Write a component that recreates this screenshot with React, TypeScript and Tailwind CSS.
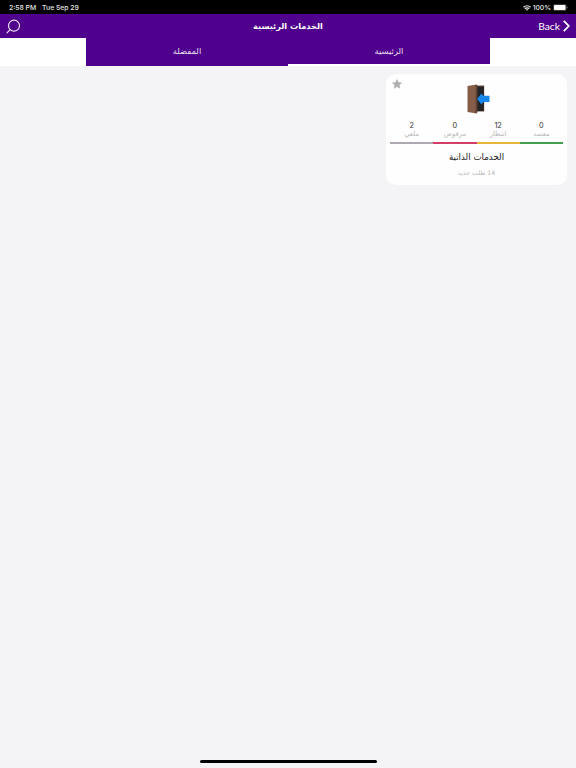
import React from 'react';

interface Stat {
  value: number;
  label: string;
  bar: string;
}

const stats: Stat[] = [
  { value: 0, label: 'معتمد', bar: 'bg-[#439f50]' },
  { value: 12, label: 'انتظار', bar: 'bg-[#e9b437]' },
  { value: 0, label: 'مرفوض', bar: 'bg-[#d33d68]' },
  { value: 2, label: 'ملغي', bar: 'bg-[#aea9b0]' },
];

const App: React.FC = () => {
  return (
    <div className="relative flex h-screen w-full flex-col overflow-hidden bg-[#f4f3f6] font-['Inter','DejaVu_Sans',sans-serif]">
      <StatusBar />
      <header className="grid h-6 grid-cols-3 items-center bg-[#4f008c] text-white">
        <SearchIcon />
        <h1 dir="rtl" className="whitespace-nowrap text-center font-['DejaVu_Sans',sans-serif] text-[8.2px] leading-6 font-bold">
          الخدمات الرئيسية
        </h1>
        <button className="flex items-center justify-end gap-[3px] pr-[6px] font-['Lato',sans-serif] text-[10.3px] leading-6">
          <span className="-mt-px">Back</span>
          <ChevronIcon />
        </button>
      </header>
      <nav className="flex h-7 justify-center bg-white">
        <div dir="rtl" className="flex w-[404px] bg-[#4f008c] text-[8.4px] text-[#eadff2]">
          <Tab label="الرئيسية" active />
          <Tab label="المفضلة" />
        </div>
      </nav>
      <main dir="rtl" className="flex-1 px-[9px] pt-2">
        <ServiceCard />
      </main>
      <div className="absolute bottom-[5px] left-[200px] h-[3px] w-[177px] rounded-full bg-black" />
    </div>
  );
};

const StatusBar = () => (
  <div className="flex h-[14px] items-center justify-between bg-black pr-[8px] pl-[9px] text-[6.8px] leading-[14px] font-medium text-[#e8e8e8]">
    <div className="flex gap-[6px] pt-px">
      <span>2:58 PM</span>
      <span>Tue Sep 29</span>
    </div>
    <div className="flex items-center gap-[2px] pt-px">
      <svg className="h-[6px] w-2" viewBox="0 0 16 12" fill="none" stroke="currentColor" strokeWidth="2.6">
        <path d="M1 4.5a10 10 0 0 1 14 0M3.6 7.4a6.2 6.2 0 0 1 8.8 0" />
        <path d="M8 11.5L5.6 9.2a3.4 3.4 0 0 1 4.8 0z" fill="currentColor" stroke="none" />
      </svg>
      <span>100%</span>
      <svg className="h-[7px] w-[15px]" viewBox="0 0 15 7">
        <rect x="0.3" y="0.3" width="13" height="6.4" rx="1.8" fill="none" stroke="#888" strokeWidth="0.5" />
        <rect x="1" y="1" width="11.6" height="5" rx="1" fill="#fff" />
        <path d="M14 2.6v1.8q.7-.3.7-.9t-.7-.9z" fill="#888" />
      </svg>
    </div>
  </div>
);

const Tab = ({ label, active }: { label: string; active?: boolean }) => (
  <button className={`flex-1 border-b-2 pt-[1px] font-['DejaVu_Sans',sans-serif] ${active ? 'border-white' : 'border-transparent'}`}>
    {label}
  </button>
);

const ServiceCard = () => (
  <section className="relative h-[111px] w-[181px] rounded-[10px] bg-[#fefefe] px-1 pt-[10px]">
    <StarIcon />
    <DoorIcon />
    <div className="mt-[6px] grid grid-cols-4 text-center">
      {stats.map((stat) => (
        <div key={stat.label}>
          <div className="pt-px text-[7.3px] leading-[9px] text-[#333]">{stat.value}</div>
          <div className="h-3 font-['DejaVu_Sans',sans-serif] text-[6.8px] leading-[9px] text-[#b8b8b8]">{stat.label}</div>
          <div className={`h-[2px] ${stat.bar}`} />
        </div>
      ))}
    </div>
    <h2 className="mt-[6px] text-center font-['DejaVu_Sans',sans-serif] text-[8.7px] leading-[14px] text-[#222]">الخدمات الذاتية</h2>
    <p className="mt-1 text-center font-['DejaVu_Sans',sans-serif] text-[6.3px] leading-[10px] text-[#b8b8b8]">14 طلب جديد</p>
  </section>
);

const SearchIcon = () => (
  <svg className="ml-[6px] h-[15px] w-[15px]" viewBox="0 0 15 15" fill="none" stroke="#eadff2" strokeWidth="1.2">
    <circle cx="8" cy="6.7" r="5.5" />
    <path d="M4.1 10.6L1 13.8" strokeLinecap="round" />
  </svg>
);

const ChevronIcon = () => (
  <svg className="h-3 w-[7px]" viewBox="0 0 7 12" fill="none" stroke="currentColor" strokeWidth="1.8">
    <path d="M.8.8L5.8 6L.8 11.2" />
  </svg>
);

const StarIcon = () => (
  <svg className="absolute top-[4.5px] left-[6px] h-[10px] w-[10px]" viewBox="0 0 24 24" fill="#aeaeae" stroke="#aeaeae" strokeWidth="1.5" strokeLinejoin="round">
    <path d="M12 1.5l3.2 7 7.5.8-5.6 5.1 1.6 7.6-6.7-3.9L5.3 22l1.6-7.6L1.3 9.3l7.5-.8z" />
  </svg>
);

const DoorIcon = () => (
  <svg className="relative left-[1px] mx-auto block h-[30px] w-[24px]" viewBox="0 0 24 30">
    <path d="M8 1.5h10.2v26H8z" fill="#725040" />
    <path d="M10 2.5h7.8v24.5H10z" fill="#222426" />
    <path d="M1.5 2L10.8.5V29.5L1.5 28z" fill="#865d48" />
    <path d="M9.7.7l1.8.9v26.7l-1.8 1.2z" fill="#5c4032" />
    <path d="M11.2 15l4.2-5.6 1.8 2.4H23.5v6.2h-6.3l-1.8 2.6z" fill="#1788ee" />
  </svg>
);

export default App;
